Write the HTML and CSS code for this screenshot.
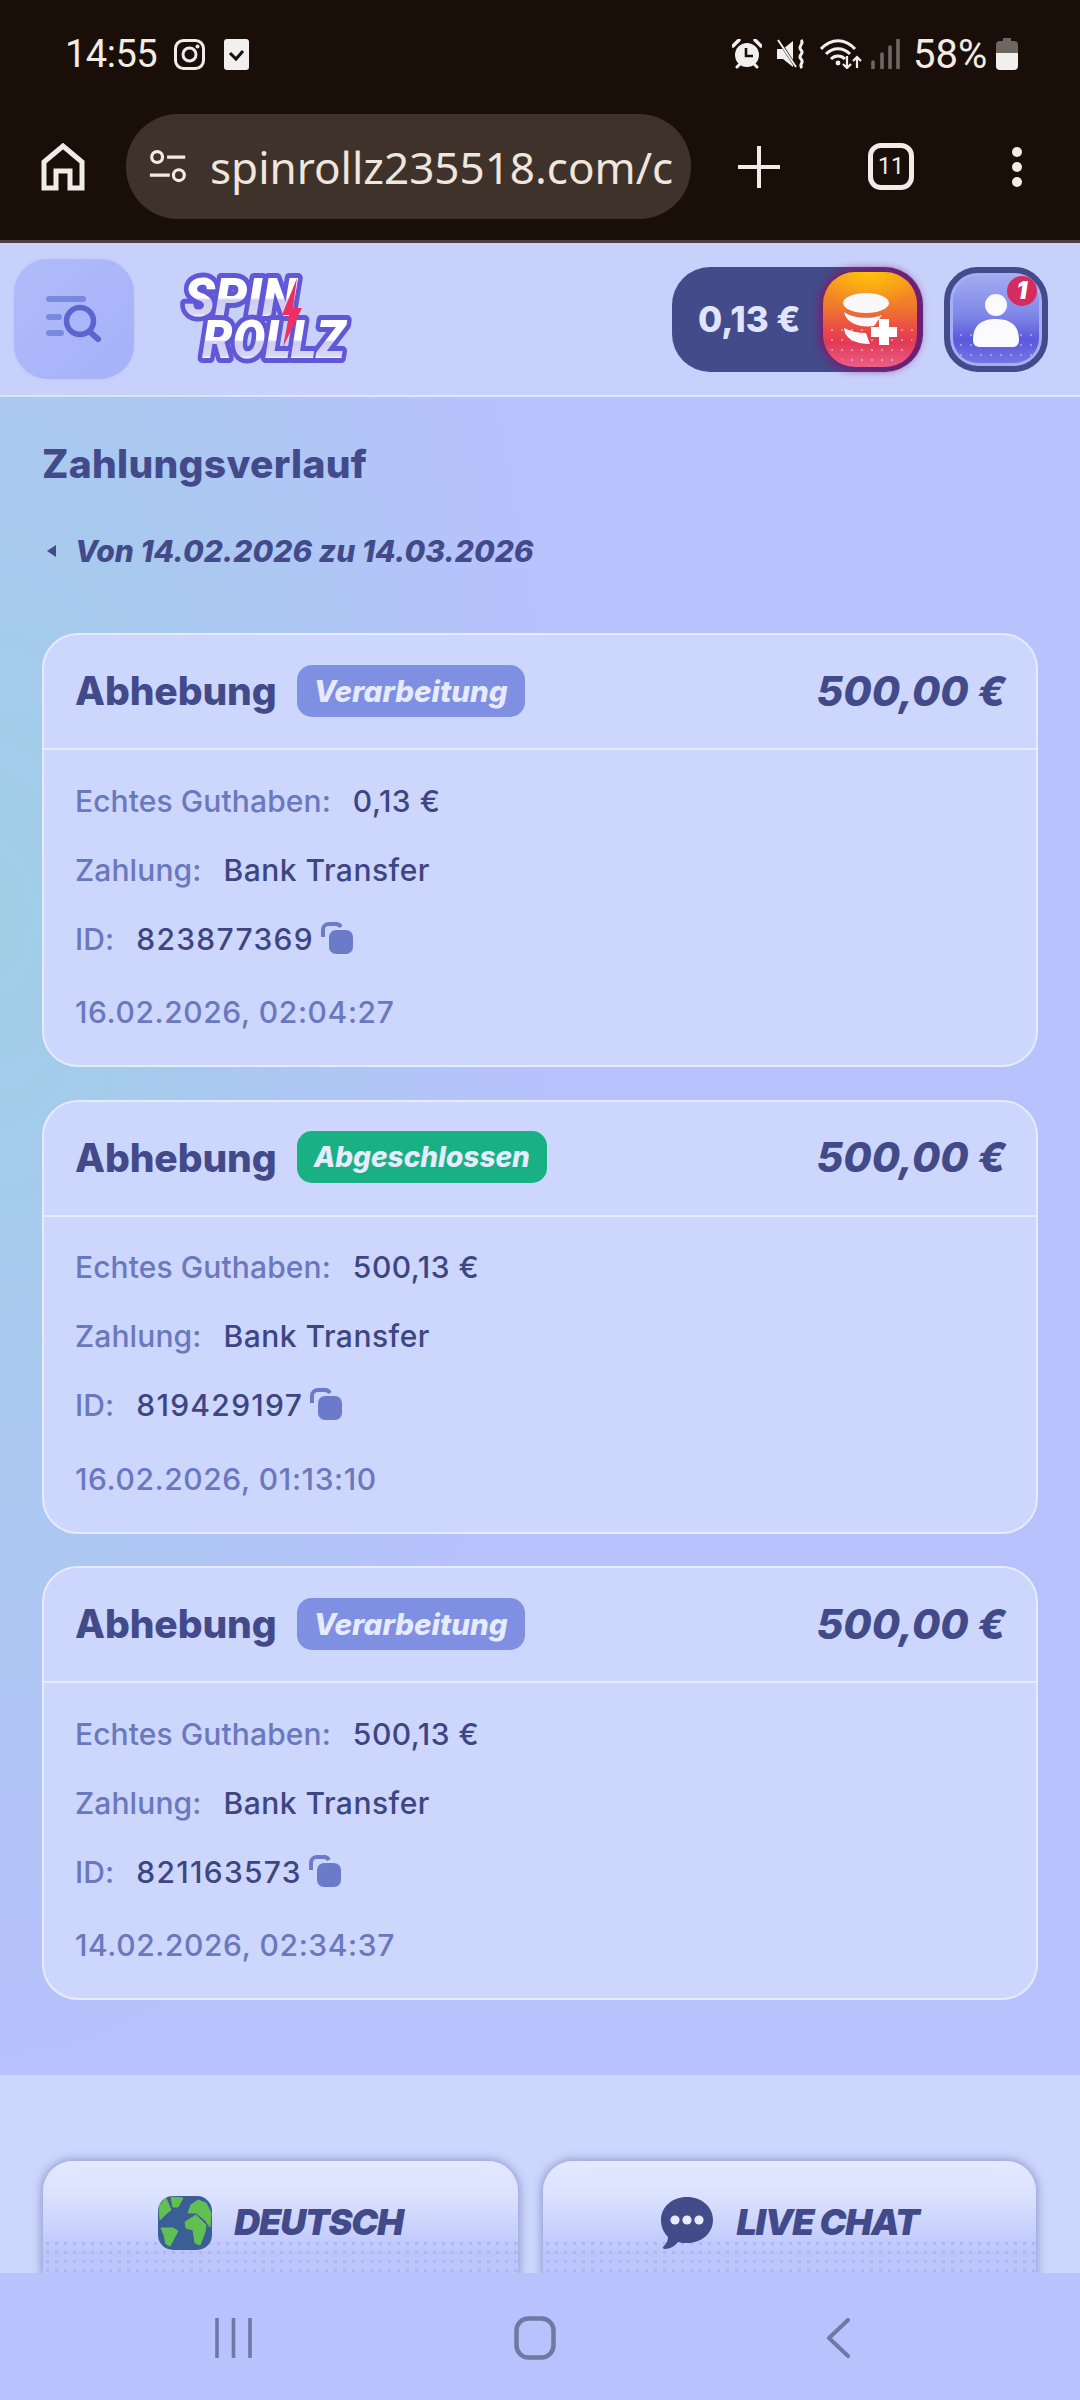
FILE: index.html
```html
<!DOCTYPE html>
<html lang="de">
<head>
<meta charset="utf-8">
<title>Zahlungsverlauf</title>
<link rel="stylesheet" href="styles.css">
</head>
<body>
<div class="status">
  <span class="clock">14:55</span>
  <svg class="ig" viewBox="0 0 31 31"><rect x="1.5" y="1.5" width="28" height="28" rx="8" fill="none" stroke="#f2ece6" stroke-width="3"/><circle cx="15.5" cy="15.5" r="6.5" fill="none" stroke="#f2ece6" stroke-width="3"/><circle cx="23.5" cy="7.5" r="2" fill="#f2ece6"/></svg>
  <svg class="chk" viewBox="0 0 25 31"><rect width="25" height="31" rx="3" fill="#f2f0ee"/><path d="M6 14l6 6 7-8" fill="none" stroke="#1a0f08" stroke-width="3"/></svg>
  <span class="spacer"></span>
  <svg class="alarm" viewBox="0 0 30 30"><circle cx="15" cy="16" r="12" fill="#f2f0ee"/><path d="M1 7l6-6M29 7l-6-6" stroke="#f2f0ee" stroke-width="3.5" stroke-linecap="round"/><path d="M5 28l3-3M25 28l-3-3" stroke="#f2f0ee" stroke-width="3" stroke-linecap="round"/><path d="M14 9v8h7" fill="none" stroke="#1a0f08" stroke-width="2.6"/></svg>
  <svg class="mute" viewBox="0 0 30 30"><path d="M0 10h6L16 2v26L6 20H0z" fill="#f2f0ee"/><path d="M2 2l17 26" stroke="#1a0f08" stroke-width="3"/><path d="M1 1l18 27" stroke="#f2f0ee" stroke-width="2"/><path d="M24 1c4 4-4 6 0 10s-4 5 0 9 -3 5 1 9" fill="none" stroke="#f2f0ee" stroke-width="3"/></svg>
  <svg class="wifi" viewBox="0 0 42 30"><path d="M1 10c10-11 24-11 34 0M6 15c7-7 17-7 24 0M11 20c4-4 10-4 14 0" fill="none" stroke="#f2f0ee" stroke-width="3"/><circle cx="18" cy="24" r="2.4" fill="#f2f0ee"/><path d="M27 17v12M23 25l4 4 4-4M37 29V18M33 22l4-4 4 4" fill="none" stroke="#f2f0ee" stroke-width="2.2"/></svg>
  <svg class="signal" viewBox="0 0 29 30"><path d="M2 23v6M11 15v14M19 8v21M27 1v28" stroke="#6d6661" stroke-width="3.6" stroke-linecap="round"/></svg>
  <span class="pct">58%</span>
  <svg class="batt" viewBox="0 0 22 32"><path d="M7 0h8v3h3a4 4 0 0 1 4 4v10H0V7a4 4 0 0 1 4-4h3z" fill="#6d6661"/><path d="M0 15h22v13a4 4 0 0 1-4 4H4a4 4 0 0 1-4-4z" fill="#f2f0ee"/></svg>
</div>
<div class="toolbar">
  <svg class="home" viewBox="0 0 44 48"><path d="M3 45V19L22 3l19 16v26H29V28H15v17z" fill="none" stroke="#f2ece6" stroke-width="5"/></svg>
  <div class="url">
    <svg class="tune" viewBox="0 0 42 42"><circle cx="9" cy="10" r="6" fill="none" stroke="#f2ece6" stroke-width="3.5"/><path d="M20 10h20M1 30h22" stroke="#f2ece6" stroke-width="3.5"/><circle cx="33" cy="30" r="6" fill="none" stroke="#f2ece6" stroke-width="3.5"/></svg>
    <span class="urltext">spinrollz235518.com/c</span>
  </div>
  <svg class="plus" viewBox="0 0 42 42"><path d="M21 0v42M0 21h42" stroke="#f2ece6" stroke-width="4" stroke-linecap="round"/></svg>
  <div class="tabs">11</div>
  <div class="dots"><i></i><i></i><i></i></div>
</div>
<header class="head">
  <button class="menu">
    <svg viewBox="0 0 56 46" class="menu-ico"><path d="M3 3h34M3 21h10M3 37h12" stroke="#7a88de" stroke-width="6" stroke-linecap="round"/><circle cx="34" cy="25" r="13.5" fill="none" stroke="#5a65d0" stroke-width="5.5"/><path d="M44 36l8 7" stroke="#5a65d0" stroke-width="6" stroke-linecap="round"/></svg>
  </button>
  <svg class="logo" viewBox="0 0 176 96">
    <defs><linearGradient id="lg" x1="0" y1="0" x2="0" y2="1"><stop offset="0" stop-color="#fff"/><stop offset=".5" stop-color="#fff"/><stop offset=".54" stop-color="#cfcdf0"/><stop offset=".76" stop-color="#d8d6f3"/><stop offset=".8" stop-color="#fff"/><stop offset="1" stop-color="#fff"/></linearGradient></defs>
    <text x="8" y="45" class="logo-t" textLength="113" lengthAdjust="spacingAndGlyphs">SPIN</text>
    <text x="26" y="87" class="logo-t" textLength="143" lengthAdjust="spacingAndGlyphs">ROLLZ</text>
    <path d="M121 7L106 44h7l-6 32 19-39h-9z" fill="#ee2f62"/>
  </svg>
  <span class="spacer"></span>
  <div class="pill">
    <span class="amount">0,13 €</span>
    <div class="coin">
      <svg viewBox="0 0 54 52" class="coin-ico"><ellipse cx="23" cy="10" rx="23" ry="10" fill="#fbf8fb"/><path d="M1 19c8 6 26 8 38 3l-8 11C19 35 3 31 1 19zM1 35c6 3 14 5 22 5l4 11C14 51 2 47 1 35z" fill="#fbf8fb"/><path d="M36 26h10v8h8v10h-8v8H36v-8h-8V34h8z" fill="#fff"/></svg>
    </div>
  </div>
  <div class="avatar">
    <svg viewBox="0 0 46 54" class="user"><circle cx="23" cy="11" r="11" fill="#fbfaff"/><path d="M0 46c0-16 10-21 23-21s23 5 23 21c0 5-3 7-7 7H7c-4 0-7-2-7-7z" fill="#fbfaff"/></svg>
    <span class="badge1">1</span>
  </div>
</header>
<main class="main">
  <h1 class="title">Zahlungsverlauf</h1>
  <div class="range"><span class="tri"></span>Von 14.02.2026 zu 14.03.2026</div>
  <section class="card">
    <div class="card-h"><span class="kind">Abhebung</span><span class="tag tag-p">Verarbeitung</span><span class="spacer"></span><span class="sum">500,00 €</span></div>
    <div class="card-b">
      <div class="row"><span class="lab">Echtes Guthaben:</span><span class="val">0,13 €</span></div>
      <div class="row"><span class="lab">Zahlung:</span><span class="val">Bank Transfer</span></div>
      <div class="row"><span class="lab">ID:</span><span class="val val-id">823877369</span><svg class="copy" viewBox="0 0 32 32"><path d="M2 15V8a6 6 0 0 1 6-6h6a6 6 0 0 1 6 3" fill="none" stroke="#6b7bc9" stroke-width="4"/><rect x="8" y="8" width="24" height="24" rx="7" fill="#6b7bc9"/></svg></div>
      <div class="date">16.02.2026, 02:04:27</div>
    </div>
  </section>
  <section class="card">
    <div class="card-h"><span class="kind">Abhebung</span><span class="tag tag-g">Abgeschlossen</span><span class="spacer"></span><span class="sum">500,00 €</span></div>
    <div class="card-b">
      <div class="row"><span class="lab">Echtes Guthaben:</span><span class="val">500,13 €</span></div>
      <div class="row"><span class="lab">Zahlung:</span><span class="val">Bank Transfer</span></div>
      <div class="row"><span class="lab">ID:</span><span class="val val-id">819429197</span><svg class="copy" viewBox="0 0 32 32"><path d="M2 15V8a6 6 0 0 1 6-6h6a6 6 0 0 1 6 3" fill="none" stroke="#6b7bc9" stroke-width="4"/><rect x="8" y="8" width="24" height="24" rx="7" fill="#6b7bc9"/></svg></div>
      <div class="date">16.02.2026, 01:13:10</div>
    </div>
  </section>
  <section class="card">
    <div class="card-h"><span class="kind">Abhebung</span><span class="tag tag-p">Verarbeitung</span><span class="spacer"></span><span class="sum">500,00 €</span></div>
    <div class="card-b">
      <div class="row"><span class="lab">Echtes Guthaben:</span><span class="val">500,13 €</span></div>
      <div class="row"><span class="lab">Zahlung:</span><span class="val">Bank Transfer</span></div>
      <div class="row"><span class="lab">ID:</span><span class="val val-id">821163573</span><svg class="copy" viewBox="0 0 32 32"><path d="M2 15V8a6 6 0 0 1 6-6h6a6 6 0 0 1 6 3" fill="none" stroke="#6b7bc9" stroke-width="4"/><rect x="8" y="8" width="24" height="24" rx="7" fill="#6b7bc9"/></svg></div>
      <div class="date">14.02.2026, 02:34:37</div>
    </div>
  </section>
</main>
<footer class="foot">
  <div class="fbtn fbtn-l">
    <svg class="f-ico" viewBox="0 0 54 54"><rect width="54" height="54" rx="15" fill="#3a5f96"/><path d="M1 10L8 2l5 12-4 3-7 7zM13 1l12 1-5 9h-5zM33 9l7-5 8 3 5 10-1 14-5-7-9-7h-8zM27 26l11-7 10 10-1 7-5 13-5-2-2-13-7-2zM3 32h12l5 3-8 15-4-2-2-9z" fill="#62bf52" stroke="#62bf52" stroke-width="1" stroke-linejoin="round"/></svg>
    <span class="f-t">DEUTSCH</span>
  </div>
  <div class="fbtn fbtn-r">
    <svg class="f-ico" viewBox="0 0 54 54"><path d="M27 1c15 0 26 10 26 23S42 47 27 47c-3 0-6 0-9-1-3 4-8 7-13 7-2 0-3-2-1-3 3-3 4-6 4-9C3 36 1 30 1 24 1 11 12 1 27 1z" fill="#434b8a"/><circle cx="15" cy="24" r="4.6" fill="#e6ebff"/><circle cx="27" cy="24" r="4.6" fill="#e6ebff"/><circle cx="39" cy="24" r="4.6" fill="#e6ebff"/></svg>
    <span class="f-t">LIVE CHAT</span>
  </div>
</footer>
<nav class="nav">
  <svg class="n-recent" viewBox="0 0 37 40"><path d="M2 1v38M18.500 1v38M35 1v38" stroke="#6f79a3" stroke-width="3.6" stroke-linecap="round"/></svg>
  <svg class="n-home" viewBox="0 0 42 44"><rect x="2.500" y="2.500" width="37" height="39" rx="12" fill="none" stroke="#6f79a3" stroke-width="4.5"/></svg>
  <svg class="n-back" viewBox="0 0 24 40"><path d="M22 2L3 20l19 18" fill="none" stroke="#6f79a3" stroke-width="4" stroke-linecap="round" stroke-linejoin="round"/></svg>
</nav>
</body>
</html>
```
FILE: styles.css
```css
* { box-sizing: border-box; }
html, body { margin: 0; padding: 0; }
body { width: 1080px; height: 2400px; overflow: hidden; font-family: Inter, Roboto, sans-serif; background: #b8c2fd; display: flex; flex-direction: column; }
.spacer { flex: 1; }

.status { height: 108px; background: #1a0f08; display: flex; align-items: center; padding: 0 62px 0 65px; color: #f2ece6; flex: none; font-family: Roboto, sans-serif; }
.clock { font-size: 38px; width: 109px; letter-spacing: -.5px; }
.ig { width: 31px; height: 31px; }
.chk { width: 25px; height: 31px; margin-left: 19px; }
.alarm { width: 30px; height: 30px; }
.mute { width: 30px; height: 30px; margin-left: 15px; }
.wifi { width: 42px; height: 30px; margin-left: 13px; }
.signal { width: 29px; height: 30px; margin-left: 9px; }
.pct { font-size: 40px; margin-left: 13px; width: 83px; }
.batt { width: 22px; height: 32px; }

.toolbar { height: 135px; background: #1a0f08; border-bottom: 3px solid #4a3f45; display: flex; align-items: flex-start; padding: 6px 0 0 41px; flex: none; }
.home { width: 44px; height: 48px; margin-top: 29px; }
.url { width: 565px; height: 105px; margin-left: 41px; border-radius: 52px; background: #3f322b; display: flex; align-items: center; padding-left: 23px; overflow: hidden; }
.tune { width: 38px; height: 38px; flex: none; }
.urltext { font-size: 44px; color: #efe6dd; margin-left: 23px; white-space: nowrap; font-family: "Noto Sans", sans-serif; }
.plus { width: 42px; height: 42px; margin: 32px 0 0 47px; }
.tabs { width: 46px; height: 47px; margin: 29px 0 0 88px; border: 5px solid #f2ece6; border-radius: 13px; color: #f2ece6; font-size: 23px; font-family: Roboto, sans-serif; display: flex; align-items: center; justify-content: center; }
.dots { margin: 33px 0 0 98px; display: flex; flex-direction: column; gap: 5px; }
.dots i { width: 10px; height: 10px; border-radius: 50%; background: #f2ece6; }

.head { height: 154px; background: #c8d1fb; border-bottom: 2px solid #dfe5ff; display: flex; align-items: center; padding: 0 32px 0 12px; flex: none; }
.menu { width: 124px; height: 124px; border-radius: 36px; background: linear-gradient(135deg, #b0bbfb, #a6b2f8); border: 2px solid #c4cdfb; display: flex; align-items: center; justify-content: center; padding: 0; }
.menu-ico { width: 56px; height: 46px; }
.logo { width: 176px; height: 96px; margin-left: 40px; overflow: visible; }
.logo-t { font-family: Roboto, sans-serif; font-weight: 900; font-style: italic; font-size: 54px; fill: url(#lg); stroke: #6158d8; stroke-width: 10px; paint-order: stroke; stroke-linejoin: round; }
.pill { width: 251px; height: 105px; border-radius: 38px; background: linear-gradient(90deg, #434b8a 70%, #5a2a7a 100%); display: flex; align-items: center; padding: 0 6px 0 26px; }
.amount { font-size: 35px; font-weight: 800; color: #dfe4ff; flex: 1; white-space: nowrap; }
.coin { position: relative; width: 94px; height: 95px; border-radius: 32px; background: radial-gradient(ellipse 60px 36px at 50% 0, #ffc20a, transparent), linear-gradient(180deg, #f6921f 0, #f07c2c 35%, #e8484a 62%, #e23a55 75%, #ea6088 100%); box-shadow: 0 0 10px 2px #8a0e6a; display: flex; align-items: center; justify-content: center; flex: none; }
.coin-ico { width: 54px; height: 52px; position: relative; z-index: 1; }
.coin::after { content: ""; position: absolute; left: 4px; right: 4px; bottom: 4px; height: 38px; border-radius: 0 0 28px 28px; background: radial-gradient(circle 1.5px, rgba(255,255,255,.4) 98%, transparent) 0 0 / 10px 10px repeat; }
.avatar { position: relative; width: 104px; height: 105px; margin-left: 21px; border-radius: 34px; border: 6px solid #434b8a; background: linear-gradient(180deg, #a3adf2 0, #7f88e8 45%, #5b58dc 72%, #7d78e6 100%); box-shadow: inset 0 0 0 3px #a5adf3; display: flex; align-items: center; justify-content: center; }
.avatar::after { content: ""; position: absolute; left: 6px; right: 6px; bottom: 6px; height: 30px; background: radial-gradient(circle 1.5px, rgba(255,255,255,.35) 98%, transparent) 0 0 / 10px 10px repeat; }
.user { width: 46px; height: 54px; margin-top: 4px; position: relative; z-index: 1; }
.badge1 { position: absolute; z-index: 2; top: 3px; right: 5px; width: 30px; height: 30px; border-radius: 50%; background: #d62b5e; color: #fff; font-size: 24px; font-weight: 900; font-style: italic; display: flex; align-items: center; justify-content: center; }

.main { height: 1678px; padding: 0 42px; flex: none; background: radial-gradient(ellipse 560px 1150px at 0 520px, #9fcee6 0, rgba(159,206,230,0) 100%), #b8c2fd; }
.title { margin: 44px 0 0; font-size: 39px; line-height: 46px; font-weight: 800; letter-spacing: .3px; color: #424a8a; }
.range { margin-top: 44px; height: 40px; display: flex; align-items: center; font-size: 30px; font-weight: 800; font-style: italic; color: #424a8a; margin-bottom: 62px; }
.tri { width: 0; height: 0; border-style: solid; border-width: 6px 9px 6px 0; border-color: transparent #424a8a transparent transparent; margin: 0 19px 0 5px; }

.card { height: 434px; margin-bottom: 32.500px; border-radius: 36px; background: #cdd6fc; border: 2px solid #e6ebff; overflow: hidden; }
.card-h { height: 115px; border-bottom: 2px solid #e6ebff; display: flex; align-items: center; padding: 0 30px 2px 31px; }
.kind { font-size: 39px; font-weight: 800; letter-spacing: -.1px; color: #424a8a; }
.tag { margin-left: 20px; height: 52px; padding: 0 17px; border-radius: 15px; display: flex; align-items: center; font-weight: 800; font-style: italic; color: #e6ebff; }
.tag-p { background: #7f90e3; font-size: 29.500px; }
.tag-g { background: #19b184; font-size: 28px; }
.sum { font-size: 41px; font-weight: 800; font-style: italic; color: #424a8a; }
.card-b { padding: 16px 31px 0; }
.row { height: 69px; display: flex; align-items: center; font-size: 30px; font-weight: 500; }
.lab { color: #6a78bd; margin-right: 22px; letter-spacing: .1px; }
.val { color: #3d4582; letter-spacing: .5px; }
.val-id { letter-spacing: 1.300px; }
.copy { width: 32px; height: 32px; margin: -2px 0 0 7px; }
.date { margin-top: 5px; font-size: 30px; line-height: 69px; font-weight: 500; letter-spacing: .6px; color: #6a78bd; }

.foot { height: 198px; flex: none; background: #cdd6fc; overflow: hidden; display: flex; padding: 86px 43px 0; gap: 25px; }
.fbtn { position: relative; height: 140px; border-radius: 30px; box-shadow: 0 0 8px 2px rgba(80,90,160,.45); display: flex; align-items: flex-start; justify-content: center; padding-top: 35px; gap: 22px; background: linear-gradient(180deg, #e4e9ff 0, #dbe1ff 25%, #c7cffc 52%, #bdc6fb 65%, #bdc6fb 100%); }
.fbtn::after { content: ""; position: absolute; left: 0; right: 0; top: 78px; height: 54px; background: radial-gradient(circle 1.5px, #aeb7f3 98%, transparent) 0 0 / 9px 9px repeat; }
.fbtn-l { width: 475px; }
.fbtn-r { width: 493px; }
.f-ico { width: 54px; height: 54px; position: relative; z-index: 1; }
.f-t { font-size: 36px; line-height: 52px; font-weight: 900; font-style: italic; letter-spacing: -1.200px; color: #424a8a; position: relative; z-index: 1; }

.nav { height: 126px; flex: none; background: #b8c2fd; display: flex; align-items: center; padding: 3px 0 0 215px; }
.n-recent { width: 37px; height: 40px; }
.n-home { width: 42px; height: 44px; margin-left: 262px; }
.n-back { width: 24px; height: 40px; margin-left: 270px; }
```
